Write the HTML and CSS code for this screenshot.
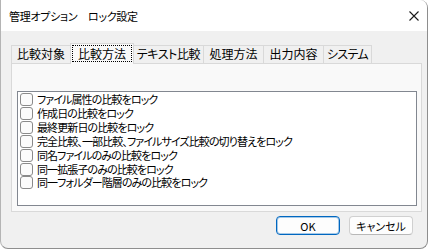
FILE: index.html
```html
<!DOCTYPE html>
<html lang="ja">
<head>
<meta charset="utf-8">
<title>管理オプション　ロック設定</title>
<link rel="stylesheet" href="styles.css">
</head>
<body>
<div class="window">
  <div class="titlebar">
    <span class="title">管理オプション　ロック設定</span>
    <svg class="close" width="10" height="10" viewBox="0 0 10 10"><path d="M0.5 0.5 L9.5 9.5 M9.5 0.5 L0.5 9.5" stroke="#1a1a1a" stroke-width="1.1" fill="none"/></svg>
  </div>
  <div class="content">
    <div class="tabs">
      <div class="tab t1">比較対象</div>
      <div class="tab t2 active"><span class="focus">比較方法</span></div>
      <div class="tab t3">テキスト比較</div>
      <div class="tab t4">処理方法</div>
      <div class="tab t5">出力内容</div>
      <div class="tab t6">システム</div>
    </div>
    <div class="panel">
      <div class="list">
        <div class="item"><span class="cb"></span><span class="label">ファイル属性の比較をロック</span></div>
        <div class="item"><span class="cb"></span><span class="label">作成日の比較をロック</span></div>
        <div class="item"><span class="cb"></span><span class="label">最終更新日の比較をロック</span></div>
        <div class="item"><span class="cb"></span><span class="label">完全比較、一部比較、ファイルサイズ比較の切り替えをロック</span></div>
        <div class="item"><span class="cb"></span><span class="label">同名ファイルのみの比較をロック</span></div>
        <div class="item"><span class="cb"></span><span class="label">同一拡張子のみの比較をロック</span></div>
        <div class="item"><span class="cb"></span><span class="label">同一フォルダー階層のみの比較をロック</span></div>
      </div>
    </div>
    <div class="buttons">
      <button class="btn default">OK</button>
      <button class="btn">キャンセル</button>
    </div>
  </div>
</div>
</body>
</html>
```
FILE: styles.css
```css
html, body {
  margin: 0;
  padding: 0;
  background: #ffffff;
}
body {
  font-family: "Noto Sans CJK JP", "Noto Sans", sans-serif;
  font-feature-settings: "palt" 1;
  color: #000;
}
.window {
  width: 428px;
  height: 249px;
  box-sizing: border-box;
  display: flex;
  flex-direction: column;
  border-left: 1px solid #b4b4b4;
  border-right: 1px solid #8e8e8e;
  border-bottom: 1px solid #8e8e8e;
  border-radius: 0 8px 8px 8px;
  overflow: hidden;
  background: #f0f0f0;
}
.titlebar {
  height: 31px;
  flex: none;
  background: #ffffff;
  display: flex;
  align-items: center;
  justify-content: space-between;
  padding: 0 8px 0 8px;
}
.title {
  font-size: 11px;
  line-height: 14px;
  margin-top: 1px;
  letter-spacing: -0.3px;
}
.close {
  display: block;
}
.content {
  flex: 1;
  display: flex;
  flex-direction: column;
  padding: 12px 5px 13px 10px;
  min-height: 0;
}
.tabs {
  display: flex;
  align-items: flex-end;
  height: 21px;
  margin-bottom: -1px;
  position: relative;
  z-index: 1;
  flex: none;
}
.tab {
  box-sizing: border-box;
  height: 18px;
  margin-bottom: 1px;
  border: 1px solid #d9d9d9;
  border-bottom: none;
  margin-right: -1px;
  padding: 0;
  text-align: center;
  font-size: 12px;
  line-height: 16px;
  background: #f0f0f0;
  white-space: nowrap;
}
.t1 { width: 60px; }
.t2 { width: 64px; }
.t3 { width: 71px; letter-spacing: -0.4px; }
.t4 { width: 61px; }
.t5 { width: 61px; }
.t6 { width: 49px; letter-spacing: -0.6px; }
.tab.active {
  height: 21px;
  margin-bottom: 0;
  background: #f9f9f9;
  padding: 2px 2px 0 2px;
}
.focus {
  display: block;
  outline: 1px dotted #000;
  line-height: 15px;
}
.panel {
  flex: 1;
  min-height: 0;
  background: #f9f9f9;
  border: 1px solid #d9d9d9;
  padding: 27px 4px 5px 5px;
  display: flex;
  flex-direction: column;
}
.list {
  flex: 1;
  background: #ffffff;
  border: 1px solid #828790;
  padding-top: 1px;
}
.item {
  display: flex;
  align-items: center;
  height: 13.85px;
  padding-left: 2px;
  font-size: 11px;
  line-height: 13px;
  letter-spacing: -0.9px;
  white-space: nowrap;
}
.cb {
  box-sizing: border-box;
  width: 13px;
  height: 13px;
  border: 1px solid #8a8a8a;
  border-radius: 3px;
  background: #fbfbfb;
  margin-right: 4px;
  flex: none;
}
.buttons {
  flex: none;
  display: flex;
  justify-content: flex-end;
  gap: 9px;
  margin-top: 4px;
  margin-right: 9px;
}
.btn {
  box-sizing: border-box;
  width: 64px;
  height: 19px;
  padding: 0;
  font-family: "Noto Sans CJK JP", "Noto Sans", sans-serif;
  font-feature-settings: "palt" 1;
  font-size: 11px;
  line-height: 16px;
  color: #000;
  background: #fdfdfd;
  border: 1px solid #d0d0d0;
  border-bottom-color: #b8b8b8;
  border-radius: 4px;
}
.btn.default {
  border: 1px solid #0067c0;
  box-shadow: inset 0 0 0 1px rgba(0, 103, 192, 0.35);
}
```
